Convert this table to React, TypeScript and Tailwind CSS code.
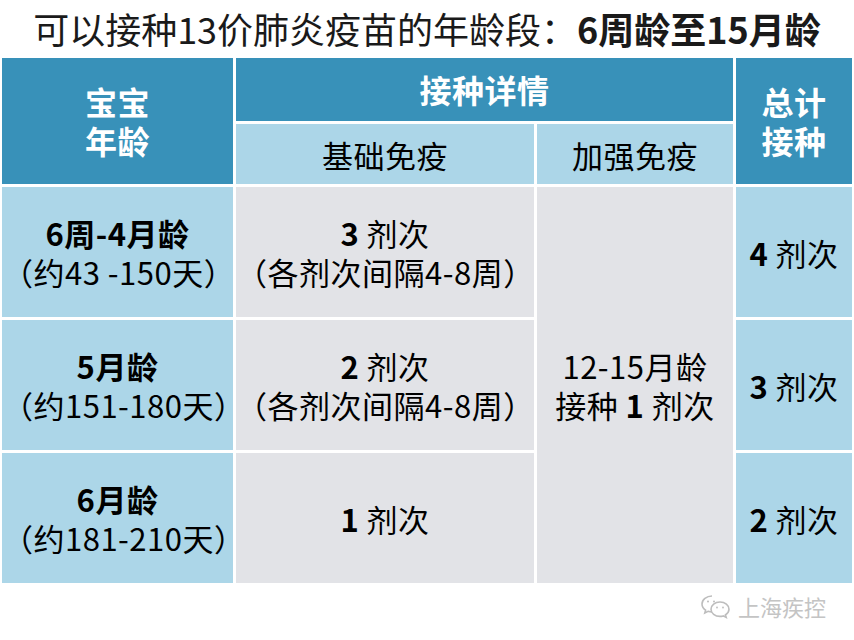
const dark = "bg-[#3891b9]";
const light = "bg-[#acd6e8]";
const gray = "bg-[#e2e3e7]";

function Bold({ children }: { children: React.ReactNode }) {
  return <span className="font-bold">{children}</span>;
}

function WeChatIcon() {
  return (
    <svg width="32" height="28" viewBox="0 0 32 28" fill="none" stroke="#bdbdbd" strokeWidth="1.6">
      <path d="M12 3C6.5 3 2 6.6 2 11c0 2.5 1.4 4.7 3.6 6.1L4.8 20l3.3-1.7c1.2.4 2.5.6 3.9.6" />
      <path d="M20 9c-5 0-9 3.2-9 7.2s4 7.2 9 7.2c1.1 0 2.2-.2 3.2-.5l3 1.6-.8-2.7c2-1.3 3.6-3.3 3.6-5.6C29 12.2 25 9 20 9z" />
      <circle cx="8" cy="8.5" r="1" fill="#bdbdbd" stroke="none" />
      <circle cx="14" cy="8.5" r="1" fill="#bdbdbd" stroke="none" />
      <circle cx="17" cy="14.5" r="0.9" fill="#bdbdbd" stroke="none" />
      <circle cx="23" cy="14.5" r="0.9" fill="#bdbdbd" stroke="none" />
    </svg>
  );
}

export default function App() {
  return (
    <div
      className="w-[854px] h-[640px] bg-white overflow-hidden text-black"
      style={{ fontFamily: '"Noto Sans CJK SC", "Noto Sans", sans-serif' }}
    >
      <h1 className="h-[58px] text-center text-[36px] leading-[56px] text-[#1a1a1a] font-normal">
        <span>可以接种13价肺炎疫苗的年龄段：</span>
        <span className="font-bold">6周龄至15月龄</span>
      </h1>

      <div className="pl-[2px] grid grid-cols-[231px_298px_196px_116px] grid-rows-[63px_60px_130px_130px_130px] gap-[3px] text-[31px] leading-[39px] text-center tracking-[0.5px]">
        <div className={`${dark} row-span-2 flex flex-col items-center justify-center text-white font-bold text-[32px] leading-[39px]`}>
          <div>宝宝</div>
          <div>年龄</div>
        </div>
        <div className={`${dark} col-span-2 flex items-center justify-center text-white font-bold text-[32px]`}>
          接种详情
        </div>
        <div className={`${dark} row-span-2 flex flex-col items-center justify-center text-white font-bold text-[32px] leading-[39px]`}>
          <div>总计</div>
          <div>接种</div>
        </div>
        <div className={`${light} flex items-center justify-center`}>基础免疫</div>
        <div className={`${light} flex items-center justify-center`}>加强免疫</div>

        <div className={`${light} flex flex-col items-center justify-center`}>
          <div className="font-bold">6周-4月龄</div>
          <div>（约43 -150天）</div>
        </div>
        <div className={`${gray} flex flex-col items-center justify-center`}>
          <div><Bold>3</Bold> 剂次</div>
          <div>（各剂次间隔4-8周）</div>
        </div>
        <div className={`${gray} row-span-3 flex flex-col items-center justify-center`}>
          <div>12-15月龄</div>
          <div>接种 <Bold>1</Bold> 剂次</div>
        </div>
        <div className={`${light} flex items-center justify-center`}>
          <div><Bold>4</Bold> 剂次</div>
        </div>

        <div className={`${light} flex flex-col items-center justify-center`}>
          <div className="font-bold">5月龄</div>
          <div>（约151-180天）</div>
        </div>
        <div className={`${gray} flex flex-col items-center justify-center`}>
          <div><Bold>2</Bold> 剂次</div>
          <div>（各剂次间隔4-8周）</div>
        </div>
        <div className={`${light} flex items-center justify-center`}>
          <div><Bold>3</Bold> 剂次</div>
        </div>

        <div className={`${light} flex flex-col items-center justify-center`}>
          <div className="font-bold">6月龄</div>
          <div>（约181-210天）</div>
        </div>
        <div className={`${gray} flex items-center justify-center`}>
          <div><Bold>1</Bold> 剂次</div>
        </div>
        <div className={`${light} flex items-center justify-center`}>
          <div><Bold>2</Bold> 剂次</div>
        </div>
      </div>

      <div className="flex justify-end items-center gap-[6px] pr-[28px] pt-[7px] text-[22px] text-[#c4c4c4]">
        <WeChatIcon />
        <span>上海疾控</span>
      </div>
    </div>
  );
}
